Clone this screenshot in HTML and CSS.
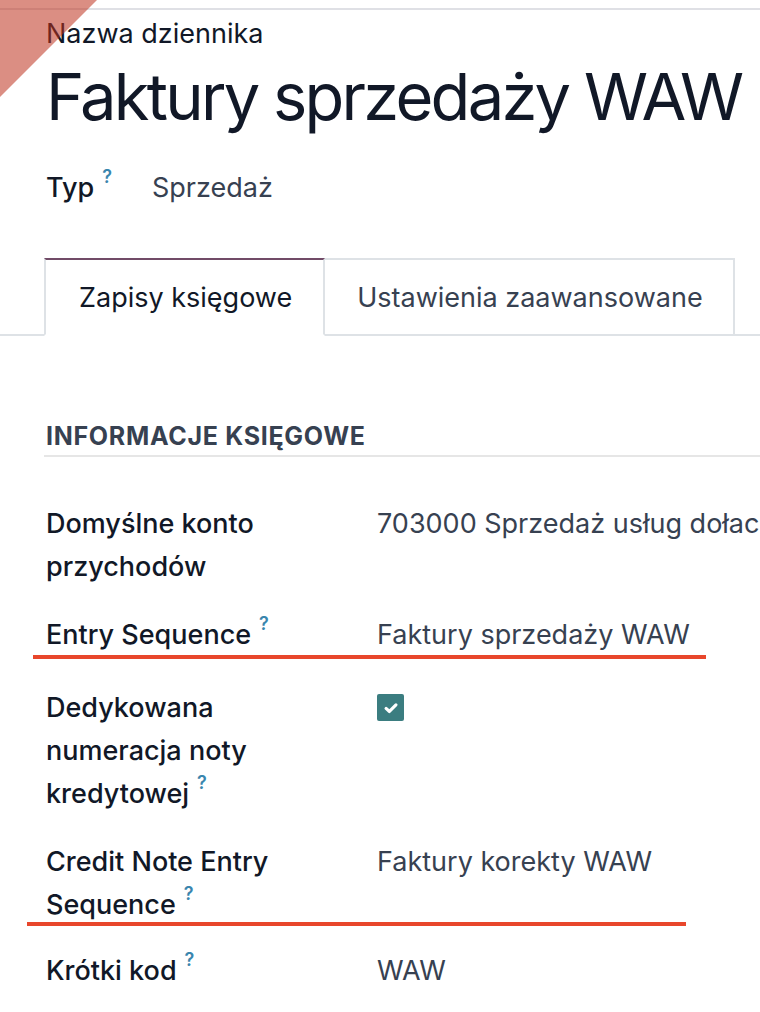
FILE: index.html
```html
<!DOCTYPE html>
<html lang="pl">
<head>
<meta charset="utf-8">
<title>Faktury sprzedaży WAW</title>
<link rel="stylesheet" href="styles.css">
</head>
<body>
<div class="topbar"></div>
<div class="ribbon"></div>
<div class="sheet">
  <div class="name-label">Nazwa dziennika</div>
  <h1 class="title">Faktury sprzedaży WAW</h1>
  <div class="type-row">
    <span class="type-label">Typ<sup class="help">?</sup></span>
    <span class="type-value">Sprzedaż</span>
  </div>
</div>
<div class="tabs">
  <div class="tab active">Zapisy księgowe</div>
  <div class="tab">Ustawienia zaawansowane</div>
</div>
<div class="section">
  <div class="section-title">INFORMACJE KSIĘGOWE</div>
  <div class="fields">
    <div class="field">
      <div class="label">Domyślne konto przychodów</div>
      <div class="value">703000 Sprzedaż usług dołaczonych</div>
    </div>
    <div class="field field-tall">
      <div class="label">Entry Sequence<sup class="help">?</sup></div>
      <div class="value">Faktury sprzedaży WAW</div>
      <div class="mark mark-one"></div>
    </div>
    <div class="field">
      <div class="label">Dedykowana numeracja noty kredytowej<sup class="help">?</sup></div>
      <div class="value">
        <span class="checkbox"><svg viewBox="0 0 16 16" width="18" height="18"><path d="M3.6 8.4 L6.6 11.1 L12.4 5.3" fill="none" stroke="#fff" stroke-width="2.8" stroke-linecap="round" stroke-linejoin="round"/></svg></span>
      </div>
    </div>
    <div class="field">
      <div class="label">Credit Note Entry Sequence<sup class="help">?</sup></div>
      <div class="value">Faktury korekty WAW</div>
      <div class="mark mark-two"></div>
    </div>
    <div class="field field-last">
      <div class="label">Krótki kod<sup class="help">?</sup></div>
      <div class="value">WAW</div>
    </div>
  </div>
</div>
</body>
</html>
```
FILE: styles.css
```css
html, body {
  margin: 0;
  padding: 0;
}
body {
  width: 760px;
  height: 1012px;
  overflow: hidden;
  position: relative;
  background: #ffffff;
  font-family: Inter, "Noto Sans", sans-serif;
  color: #374151;
}
.topbar {
  height: 8px;
  border-bottom: 2px solid #dfe0e5;
}
.ribbon {
  position: absolute;
  top: 0;
  left: 0;
  width: 97px;
  height: 97px;
  background: rgba(190, 50, 30, 0.55);
  clip-path: polygon(0 0, 100% 0, 0 100%);
  z-index: 5;
}
.sheet {
  padding-left: 46px;
}
.name-label {
  margin-top: 4px;
  font-size: 27px;
  line-height: 39px;
  color: #111827;
}
.title {
  margin: 4px 0 0;
  font-size: 65px;
  line-height: 79px;
  font-weight: 400;
  letter-spacing: -2.75px;
  color: #111827;
  white-space: nowrap;
}
.type-row {
  display: flex;
  margin-top: 32px;
  font-size: 27px;
  line-height: 39px;
}
.type-label {
  width: 106px;
  font-weight: 500;
  color: #111827;
}
.type-value {
  color: #374151;
}
.help {
  font-size: 18px;
  font-weight: 600;
  color: #3a86ae;
  line-height: 0;
  margin-left: 8px;
  vertical-align: 14px;
}
.tabs {
  display: flex;
  margin-top: 51px;
  padding-left: 44px;
  border-bottom: 2px solid #dee2e6;
}
.tab {
  padding: 17.5px 30px 17.5px 32px;
  font-size: 27px;
  line-height: 39px;
  color: #374151;
  border: 2px solid #dee2e6;
  border-left-width: 0;
  margin-bottom: -2px;
  background: #fff;
}
.tab.active {
  padding: 17.5px 31px 17.5px 33px;
  border-left-width: 2px;
  border-top-color: #714b67;
  border-bottom-color: #fff;
  color: #111827;
}
.section {
  margin-left: 44px;
  margin-top: 82px;
}
.section-title {
  padding-left: 2px;
  padding-bottom: 1px;
  font-size: 25px;
  line-height: 36px;
  font-weight: 700;
  letter-spacing: 0.7px;
  color: #374151;
  border-bottom: 2px solid #e6e6e6;
}
.fields {
  margin-top: 45px;
  padding-left: 2px;
}
.field {
  position: relative;
  display: grid;
  grid-template-columns: 331px 1fr;
  font-size: 27px;
  line-height: 43px;
  margin-bottom: 25px;
}
.field-tall {
  margin-bottom: 30px;
}
.field-last {
  margin-top: -2px;
}
.label {
  padding-right: 40px;
  font-weight: 500;
  color: #111827;
}
.value {
  white-space: nowrap;
  color: #374151;
}
.checkbox {
  display: flex;
  align-items: center;
  justify-content: center;
  width: 27px;
  height: 27px;
  margin-top: 8px;
  background: #3b7d80;
  border-radius: 2px;
}
.mark {
  position: absolute;
  height: 4px;
  background: #e8462b;
}
.mark-one {
  top: 42px;
  left: -13px;
  width: 673px;
}
.mark-two {
  top: 82px;
  left: -19px;
  width: 659px;
}
```
